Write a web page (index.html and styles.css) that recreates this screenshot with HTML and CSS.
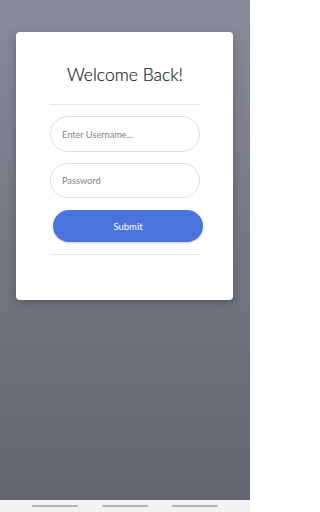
FILE: index.html
```html
<!DOCTYPE html>
<html>
<head>
<meta charset="utf-8">
<link rel="stylesheet" href="styles.css">
</head>
<body>
<div class="screen">
  <main class="stage">
    <section class="card">
      <h1 class="title">Welcome Back!</h1>
      <hr class="rule rule-top">
      <input class="field" type="text" placeholder="Enter Username...">
      <input class="field field-pass" type="password" placeholder="Password">
      <button class="submit">Submit</button>
      <hr class="rule rule-bottom">
    </section>
  </main>
  <nav class="navbar">
    <span class="dash"></span>
    <span class="dash"></span>
    <span class="dash"></span>
  </nav>
</div>
</body>
</html>
```

FILE: styles.css
```css
* { box-sizing: border-box; }
html, body { margin: 0; padding: 0; }
body {
  width: 250px;
  height: 512px;
  overflow: hidden;
  font-family: "Lato", "Noto Sans", sans-serif;
}
.screen {
  height: 512px;
  display: flex;
  flex-direction: column;
}
.stage {
  flex: 1;
  background: linear-gradient(to bottom, #8a8b98 0%, #767884 45%, #636571 100%);
  padding: 32px 17px 0 16px;
}
.card {
  background: #fff;
  height: 268px;
  border-radius: 4px;
  box-shadow: 0 3px 10px rgba(40, 42, 55, 0.35);
  padding: 31px 33px 0 34px;
  display: flex;
  flex-direction: column;
}
.title {
  margin: 0;
  font-weight: 300;
  font-size: 17.5px;
  line-height: 24px;
  text-align: center;
  color: #1e1e1e;
  -webkit-text-stroke: 0.2px #1e1e1e;
}
.rule {
  border: 0;
  height: 1px;
  background: #e6e6e6;
  margin: 0;
}
.rule-top { margin-top: 17px; }
.field {
  margin-top: 11px;
  height: 36px;
  border: 1px solid #dcdcdc;
  border-radius: 18px;
  padding: 0 11px;
  font-family: "Lato", "Noto Sans", sans-serif;
  font-size: 9.2px;
  color: #333;
  outline: none;
  background: #fff;
}
.field::placeholder { color: #858585; }
.field-pass { height: 35px; }
.submit {
  margin: 12px -3px 0 3px;
  height: 32px;
  border: 0;
  border-radius: 16px;
  background: #4b73dd;
  color: #fff;
  font-family: "Lato", "Noto Sans", sans-serif;
  font-size: 9.5px;
  box-shadow: 0 1px 2px rgba(0,0,0,0.2);
}
.rule-bottom { margin-top: 12px; }
.navbar {
  height: 12px;
  background: #f2f2f2;
  display: flex;
  justify-content: space-between;
  align-items: center;
  padding: 0 32px;
}
.dash {
  width: 46px;
  height: 2px;
  background: #b3b3b3;
  border-radius: 1px;
}
```
